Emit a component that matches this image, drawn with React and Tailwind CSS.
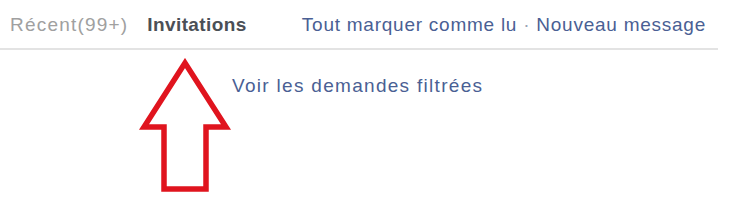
export default function App() {
  return (
    <div className="relative w-[740px] h-[205px] bg-white overflow-hidden" style={{ fontFamily: '"Liberation Sans", Arial, sans-serif' }}>
      {/* Tabs header */}
      <div className="w-[718px] h-[50px] flex items-center pl-[10px] pt-[2px] border-b-2 border-[#e3e3e3] text-[19px]">
        <span className="text-[#a0a0a0] tracking-[1.2px]">Récent(99+)</span>
        <span className="ml-[19px] font-bold text-[#4b4f56] tracking-[0.4px]">Invitations</span>
        <div className="ml-auto pr-[12px] text-[#4a5f94] tracking-[0.75px]">
          Tout marquer comme lu <span className="text-[#9aa3b5]">·</span> Nouveau message
        </div>
      </div>

      {/* Body */}
      <div className="pl-[232px] pt-[22px] text-[19px] text-[#4a5f94] tracking-[1.3px]">
        Voir les demandes filtrées
      </div>

      {/* Red arrow annotation */}
      <svg className="absolute left-[138px] top-[58px]" width="96" height="138" viewBox="0 0 96 138">
        <path
          d="M47 5 L88 69 L68 69 L68 131 L26 131 L26 69 L6 69 Z"
          fill="none"
          stroke="#e0141e"
          strokeWidth="5.5"
          strokeLinejoin="miter"
        />
      </svg>
    </div>
  )
}
